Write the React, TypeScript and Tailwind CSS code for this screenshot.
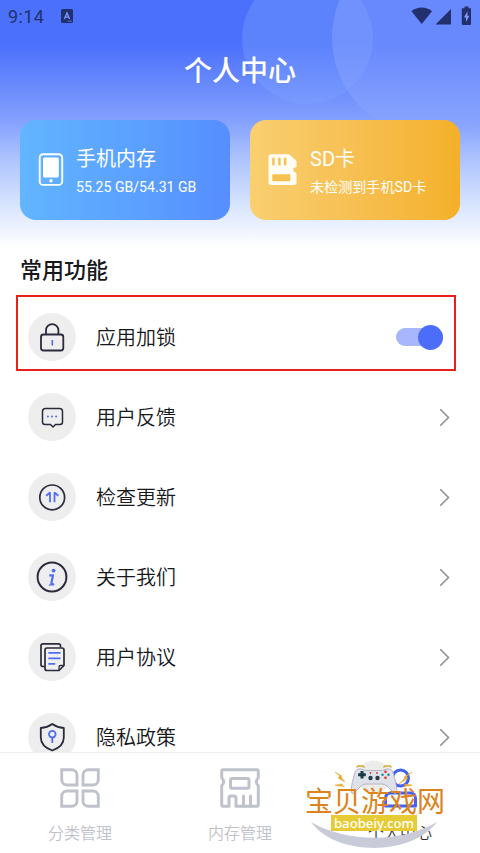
import type { ReactNode } from "react"

const INK = "#2a2c3c"
const BLUE = "#4f6df5"

function StatusBar() {
  return (
    <div className="flex h-8 items-center justify-between px-2 text-[#22306e]">
      <div className="flex items-center gap-[17px]">
        <span className="pt-px text-[18px] leading-8 tracking-[0.4px]">9:14</span>
        <svg width="12" height="14" viewBox="0 0 12 14">
          <rect width="12" height="14" rx="1.5" fill="currentColor" />
          <path d="M3.4 10 6 4l2.6 6M4.3 8.2h3.4" stroke="#7d97ff" strokeWidth="1.3" fill="none" />
          <path d="M6.5 12.2H11" stroke="#7d97ff" strokeWidth="0.6" />
        </svg>
      </div>
      <svg width="62" height="20" viewBox="0 0 62 20" fill="currentColor">
        <path d="M1.500 5.200C7.500.4 16 .4 22 5.200L11.700 18Z" />
        <path d="M41 3v15.400H25.500Z" />
        <path d="M52 2.200h2.500V.5h4v1.700H61v15.900a.8.8 0 0 1-.8.8h-7.600a.8.8 0 0 1-.8-.8V3a.8.8 0 0 1 .2-.8Z" />
        <path d="M57.500 5 54 11.500h2V16l3.300-6.300h-2Z" fill="#839dff" />
      </svg>
    </div>
  )
}

function PhoneIcon() {
  return (
    <svg width="26" height="34" viewBox="0 0 26 34">
      <rect x="1.700" y="1.200" width="22.500" height="30.700" rx="3.500" fill="none" stroke="#fff" strokeWidth="1.900" />
      <rect x="5" y="4.500" width="15.800" height="20" rx="1.500" fill="#fff" />
      <circle cx="13" cy="27.700" r="1.700" fill="#fff" />
    </svg>
  )
}

function SdIcon() {
  return (
    <svg width="30" height="32" viewBox="0 0 30 32">
      <path
        fill="#fffdf3"
        d="M3.500.3H21l7.500 6.500v6.200l-3 1v3.500l3 1.500v9.500a2.500 2.500 0 0 1-2.500 2.500H3a2.500 2.500 0 0 1-2.500-2.500V3.300a3 3 0 0 1 3-3Z"
      />
      <g fill="#f7c150">
        <rect x="4.200" y="3.500" width="2.400" height="8" rx="1" />
        <rect x="10.200" y="3.500" width="2.400" height="8" rx="1" />
        <rect x="16" y="3.500" width="2.400" height="8" rx="1" />
        <rect x="4.300" y="20.200" width="18" height="7" rx="1" />
      </g>
    </svg>
  )
}

interface StorageCardProps {
  icon: ReactNode
  title: string
  text: string
  className: string
}

function StorageCard({ icon, title, text, className }: StorageCardProps) {
  return (
    <div className={`flex h-[100px] w-[210px] items-center rounded-[16px] text-white ${className}`}>
      {icon}
      <div className="whitespace-nowrap pt-[2px]">
        <div className="text-[20px] leading-[28px]">{title}</div>
        <div className="mt-[3px] text-[14.1px] leading-[22px]">{text}</div>
      </div>
    </div>
  )
}

function LockIcon() {
  return (
    <svg width="48" height="48" viewBox="0 0 48 48" fill="none" stroke={INK} strokeWidth="1.800">
      <rect x="13" y="21.500" width="22.300" height="16" rx="2.500" />
      <path d="M18 21.500v-4.200a6.200 6.200 0 0 1 12.400 0v4.200" />
      <path d="M24.300 27v5.500" stroke={BLUE} strokeWidth="1.600" />
    </svg>
  )
}

function FeedbackIcon() {
  return (
    <svg width="48" height="48" viewBox="0 0 48 48" fill="none" stroke={INK} strokeWidth="1.500">
      <path
        strokeLinejoin="round"
        d="M17.500 15.500h14a3 3 0 0 1 3 3v10.500a2.500 2.500 0 0 1-2.500 2.500h-4.500L25 34l-2.500-2.500H17a2.500 2.500 0 0 1-2.500-2.500V18.500a3 3 0 0 1 3-3Z"
      />
      <g fill={BLUE} stroke="none">
        <circle cx="19.900" cy="23.500" r="1" />
        <circle cx="24" cy="23.500" r="1" />
        <circle cx="28.100" cy="23.500" r="1" />
      </g>
    </svg>
  )
}

function UpdateIcon() {
  return (
    <svg width="48" height="48" viewBox="0 0 48 48" fill="none">
      <circle cx="24.200" cy="24.400" r="12.400" stroke={INK} strokeWidth="1.700" />
      <path d="M18.200 22.800 22 19.500v9.700" stroke={BLUE} strokeWidth="1.800" strokeLinejoin="bevel" />
      <path d="M26.500 29.200v-9.700l3.800 3.300" stroke={BLUE} strokeWidth="1.800" strokeLinejoin="bevel" />
    </svg>
  )
}

function AboutIcon() {
  return (
    <svg width="48" height="48" viewBox="0 0 48 48" fill="none">
      <circle cx="24" cy="24" r="14.400" stroke={INK} strokeWidth="2" />
      <circle cx="25.600" cy="17.600" r="1.900" fill={BLUE} />
      <path d="M21.300 22.300h3.700l-1.700 8.200q-.2 1.600 2.800.5" stroke={BLUE} strokeWidth="2.200" strokeLinejoin="round" />
      <path d="M20.800 32q1 .4 2.800-.2" stroke={BLUE} strokeWidth="1.200" />
    </svg>
  )
}

function AgreementIcon() {
  return (
    <svg width="48" height="48" viewBox="0 0 48 48" fill="none" stroke={INK} strokeWidth="1.700" strokeLinejoin="round">
      <path d="M17 33.500h-2a2 2 0 0 1-2-2V12.800a2 2 0 0 1 2-2h15.500a2 2 0 0 1 2 2v1.700" />
      <path d="M19 15h15a2 2 0 0 1 2 2v15.500L31 37.500H19a2 2 0 0 1-2-2V17a2 2 0 0 1 2-2Z" fill="#f1f1f3" />
      <path d="M31 37.200v-3.200a1.500 1.500 0 0 1 1.500-1.500h3.200" strokeWidth="1.300" />
      <path d="M20.300 19.900h12.200M20.300 25.400h12.200M20.300 30.900h7" stroke={BLUE} />
    </svg>
  )
}

function PrivacyIcon() {
  return (
    <svg width="48" height="48" viewBox="0 0 48 48" fill="none" stroke={INK} strokeWidth="1.800" strokeLinejoin="round">
      <path d="M24.300 11c3.300 2.300 7 3.700 11.500 4v9.500c0 6-4.500 10.500-11.500 13-7-2.500-11.500-7-11.500-13V15c4.500-.3 8.200-1.700 11.500-4Z" />
      <circle cx="24.300" cy="21.200" r="3.300" stroke={BLUE} />
      <path d="M24.300 24.500V30" stroke={BLUE} />
    </svg>
  )
}

const items = [
  { label: "用户反馈", icon: <FeedbackIcon /> },
  { label: "检查更新", icon: <UpdateIcon /> },
  { label: "关于我们", icon: <AboutIcon /> },
  { label: "用户协议", icon: <AgreementIcon /> },
  { label: "隐私政策", icon: <PrivacyIcon /> },
]

interface RowProps {
  icon: ReactNode
  label: string
  children: ReactNode
}

function Row({ icon, label, children }: RowProps) {
  return (
    <div className="flex h-20 shrink-0 items-center pl-7">
      <div className="h-12 w-12 rounded-full bg-[#eeeeef]">{icon}</div>
      <span className="ml-5 flex-1 pt-[2px] text-[20px] font-[350] leading-7 text-[#17181c]">{label}</span>
      {children}
    </div>
  )
}

function Chevron() {
  return (
    <svg className="mr-[28px]" width="14" height="20" viewBox="0 0 14 20" fill="none">
      <path d="M2.200 2.200 10.500 10.500 2.200 18.800" stroke="#8d8d8f" strokeWidth="1.500" />
    </svg>
  )
}

function CategoryIcon() {
  return (
    <svg width="40" height="40" viewBox="0 0 40 40" fill="none" stroke="#bfc2cb" strokeWidth="2.900">
      <path d="M1.700 1.700h10a5.300 5.300 0 0 1 5.300 5.300v10H7A5.300 5.300 0 0 1 1.700 11.700Z" />
      <path d="M38.300 1.700h-10A5.300 5.300 0 0 0 23 7v10h10a5.300 5.300 0 0 0 5.300-5.300Z" />
      <path d="M1.700 38.300h10A5.300 5.300 0 0 0 17 33V23H7a5.300 5.300 0 0 0-5.300 5.300Z" />
      <path d="M38.300 38.300h-10A5.300 5.300 0 0 1 23 33V23h10a5.300 5.300 0 0 1 5.300 5.300Z" />
    </svg>
  )
}

function MemoryIcon() {
  return (
    <svg width="40" height="40" viewBox="0 0 40 40" fill="none" stroke="#bfc2cb" strokeWidth="3" strokeLinejoin="round">
      <path d="M3.300 1.700h33.400a1.600 1.600 0 0 1 1.600 1.600v6.500q-4 4 0 8v18.900a1.600 1.600 0 0 1-1.600 1.600H16V30a2 2 0 0 0-2-2h-3a2 2 0 0 0-2 2v8.300H3.300a1.600 1.600 0 0 1-1.600-1.600V17.800q4-4 0-8V3.300a1.600 1.600 0 0 1 1.600-1.600Z" />
      <rect x="10.500" y="10.500" width="18.500" height="9.800" rx="1.500" />
      <path d="M23.500 28v10M30.500 28v10" strokeLinecap="round" />
    </svg>
  )
}

function ProfileIcon() {
  return (
    <svg width="40" height="40" viewBox="0 0 40 40" fill="none" stroke="#4362f4" strokeWidth="3">
      <circle cx="20.500" cy="10" r="8" />
      <path d="M11 25h19q5.500 0 5.500 5.500V38h-30v-7.500Q5.500 25 11 25Z" strokeLinejoin="round" />
    </svg>
  )
}

function Tab({ icon, label, className }: { icon: ReactNode; label: string; className: string }) {
  return (
    <div className={`flex flex-1 flex-col items-center pt-[15px] text-[16px] font-[350] ${className}`}>
      {icon}
      <span className="mt-[14px] leading-6">{label}</span>
    </div>
  )
}

function Watermark() {
  return (
    <div className="absolute bottom-0 right-[32px] h-[96px] w-[144px]">
      <svg className="absolute inset-0" width="144" height="96" viewBox="0 0 144 96">
        <circle cx="70" cy="20" r="16.500" fill="#ececea" />
        <path d="M7 65c36 21 90 21 126 0-26 35-102 34-126 0Z" fill="#c9cbd9" />
        <path
          d="M57 12q3 1.500 6 1.500h14q3 0 6-1.500 5-1 6.500 4.500 2.500 8 3.500 17 0 5-4 1.500l-6-6q-2.500-2-5-2H62q-3 0-5 2l-6 6q-4 3.500-4-1.500 1-9 3.500-17Q52 11 57 12Z"
          fill="#dfe1e9"
          stroke="#a6a9b8"
          strokeWidth="0.800"
        />
        <path d="M52.500 10.500 54 9h5l1.500 1.500M79.500 10.500 81 9h5l1.500 1.500" stroke="#d8a52f" strokeWidth="1.400" fill="none" />
        <path d="M58 14v7.500M54.200 17.700h7.600" stroke="#183846" strokeWidth="3" />
        <g fill="#d5383a">
          <circle cx="81.500" cy="14.700" r="1.300" />
          <circle cx="81.500" cy="20.700" r="1.300" />
          <circle cx="66.500" cy="16" r="0.900" />
          <circle cx="73" cy="16" r="0.900" />
        </g>
        <g fill="#1a93a0">
          <circle cx="78.500" cy="17.700" r="1.300" />
          <circle cx="84.500" cy="17.700" r="1.300" />
        </g>
        <g fill="#263c4c">
          <circle cx="66.500" cy="21" r="2.200" />
          <circle cx="73.500" cy="21" r="2.200" />
        </g>
        <g fill="#eda52c" stroke="#eda52c" strokeWidth="0.500">
          <path d="m31 15 7 4-1 1 4 5-7-4 2-2ZM31 28l8-1-1.500 1.500 3 1-9-1Z" />
          <path d="m108 15-8 5 1 1-6 6 9-6-2-1ZM108 28l-8-1 2 1.500-3 1 9-1Z" />
        </g>
      </svg>
      <div className="absolute left-[1px] top-[29px] whitespace-nowrap text-[28px] leading-[34px] text-[#dd831d]">
        宝贝游戏网
      </div>
      <div className="absolute left-[27px] top-[58px] flex h-4 w-[86px] items-center justify-center bg-[#e7cb35] pb-px font-['Noto_Sans'] text-[13.2px] font-medium leading-4 text-white">
        baobeiy.com
      </div>
    </div>
  )
}

export default function App() {
  return (
    <div className="relative flex h-[853px] w-[480px] flex-col overflow-hidden bg-white font-[Roboto,'Noto_Sans_CJK_SC',sans-serif]">
      <header className="relative h-[250px] shrink-0 overflow-hidden bg-[linear-gradient(180deg,#4b70fb_0px,#4b70fb_44px,#83a0fd_120px,#a9c0fd_155px,#d6e3fe_203px,#ffffff_248px)]">
        <div className="absolute -top-[27px] left-[242px] h-[131px] w-[131px] rounded-full bg-[#7ea3ff]/35" />
        <div className="absolute -top-[60px] left-[332px] h-[196px] w-[196px] rounded-full bg-[#8ba6ff]/45" />
        <div className="relative">
          <StatusBar />
          <h1 className="mt-5 text-center text-[28px] font-medium leading-10 text-white">个人中心</h1>
          <div className="mt-7 flex justify-between px-5">
            <StorageCard
              icon={<div className="ml-[18px] mr-[12px]"><PhoneIcon /></div>}
              title="手机内存"
              text="55.25 GB/54.31 GB"
              className="bg-linear-to-r from-[#62b5ff] to-[#568eff]"
            />
            <StorageCard
              icon={<div className="ml-[18px] mr-[12px]"><SdIcon /></div>}
              title="SD卡"
              text="未检测到手机SD卡"
              className="bg-linear-to-r from-[#f9cf70] to-[#f4b027]"
            />
          </div>
        </div>
      </header>

      <main className="flex min-h-0 flex-1 flex-col overflow-hidden">
        <h2 className="mt-[5px] shrink-0 pl-5 text-[22px] font-medium leading-8 text-[#17181c]">常用功能</h2>
        <div className="mt-[10px] flex flex-col">
          <Row icon={<LockIcon />} label="应用加锁">
            <div className="mr-[37px] flex h-[18px] w-[47px] items-center justify-end rounded-full bg-[#a7b6fd]">
              <div className="h-[25px] w-[25px] shrink-0 rounded-full bg-[#4b6dfa]" />
            </div>
          </Row>
          {items.map((item) => (
            <Row key={item.label} icon={item.icon} label={item.label}>
              <Chevron />
            </Row>
          ))}
        </div>
      </main>

      <nav className="flex h-[101px] shrink-0 border-t border-[#ededee] bg-white">
        <Tab icon={<CategoryIcon />} label="分类管理" className="text-[#bfc2cb]" />
        <Tab icon={<MemoryIcon />} label="内存管理" className="text-[#bfc2cb]" />
        <Tab icon={<ProfileIcon />} label="个人中心" className="text-[#303238]" />
      </nav>

      <div className="absolute left-4 top-[295px] h-[76px] w-[440px] border-2 border-[#e8201c]" />
      <Watermark />
    </div>
  )
}
